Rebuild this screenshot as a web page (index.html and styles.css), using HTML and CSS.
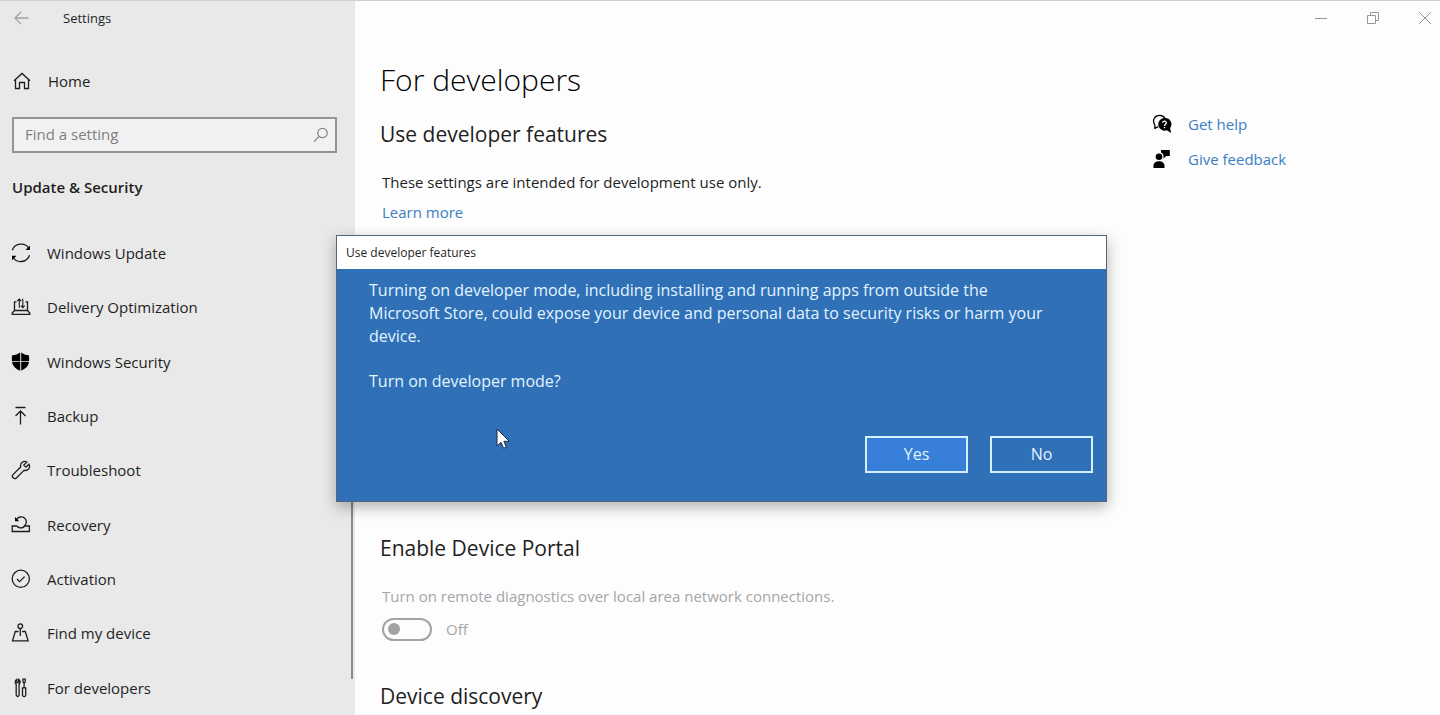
FILE: index.html
```html
<!DOCTYPE html>
<html lang="en">
<head>
<meta charset="utf-8">
<meta name="viewport" content="width=device-width, initial-scale=1">
<title>Settings</title>
<link rel="stylesheet" href="styles.css">
</head>
<body>
<div class="window">
  <aside class="sidebar">
    <header class="titlebar">
      <button class="back" type="button" aria-label="Back">
        <svg width="16" height="14" viewBox="0 0 16 14"><path d="M14.500 7H1M7 1L1 7l6 6"/></svg>
      </button>
      <span class="app-name">Settings</span>
    </header>
    <a class="home" href="#">
      <svg class="icon" width="20" height="20" viewBox="0 0 20 20"><path d="M2 9.800L10 2.500l8 7.300M3.500 8.600v8.900h4v-6h5v6h4V8.600"/></svg>
      <span>Home</span>
    </a>
    <form class="search" role="search">
      <input class="search-input" type="search" placeholder="Find a setting" aria-label="Find a setting">
      <button class="search-button" type="button" aria-label="Search">
        <svg width="16" height="16" viewBox="0 0 16 16"><circle cx="9.500" cy="6" r="4.700"/><path d="M6.200 9.400L1 14.600"/></svg>
      </button>
    </form>
    <h2 class="category">Update &amp; Security</h2>
    <nav class="nav">
      <a class="nav-item" href="#">
        <svg class="icon" width="20" height="20" viewBox="0 0 20 20"><path d="M1.300 7.200C4-.4 14.500-.8 18 5.500M18.500 12.200C15.800 20.200 5.400 20.400 1.800 14"/><path class="solid" d="M18.900 2.500v4.500h-4.500zM1 17.200v-4.500h4.500z"/></svg>
        <span>Windows Update</span>
      </a>
      <a class="nav-item" href="#">
        <svg class="icon" width="20" height="20" viewBox="0 0 20 20"><path d="M5.500 4.800H3.500V13.500M14.500 4.800h2V13.500M3.500 13.500h13l2.300 2.600v1.200H1.200v-1.200z"/><path class="thin" d="M8.300 10.800V2M6.300 4l2-2 2 2M11.800 1.800v8.800M9.900 8.700l1.900 2 1.900-2"/></svg>
        <span>Delivery Optimization</span>
      </a>
      <a class="nav-item" href="#">
        <svg class="icon" width="20" height="20" viewBox="0 0 20 20"><path class="solid" d="M9.200 .6v8.600H.9V3.400C4.200 3.300 7.200 2.100 9.200 .6zM10.200 .6v8.600h7.900V3.400C14.900 3.300 12.200 2.100 10.200 .6zM1.100 10.100h8.100V18.700C4.700 17 1.700 14.300 1.100 10.100zM18 10.100h-7.800V18.700c4.500-2 7.200-4.400 7.800-8.600z"/></svg>
        <span>Windows Security</span>
      </a>
      <a class="nav-item" href="#">
        <svg class="icon" width="20" height="20" viewBox="0 0 20 20"><path d="M4.500 1.500h10M9.500 18.500V5M4.500 10l5-5 5 5"/></svg>
        <span>Backup</span>
      </a>
      <a class="nav-item" href="#">
        <svg class="icon" width="20" height="20" viewBox="0 0 20 20"><path d="M17.900 4.200l-3 3-2.100-2.100 3-3C12.500.3 9 2.700 9.600 7L2 14.600c-2 2.200 1.300 5.300 3.400 3.400L13 10.400c4.300.6 6.800-2.700 4.900-6.200z"/></svg>
        <span>Troubleshoot</span>
      </a>
      <a class="nav-item" href="#">
        <svg class="icon" width="20" height="20" viewBox="0 0 20 20"><path d="M6.200 11H1.200v5.500h17.200V11h-5C16 8.500 16 5 13.500 3 10.800 1 7 1.800 5.500 4.600M6.200 11c.8 2.500 6.500 2.500 7.200 0"/><path class="solid" d="M4 2v4.200h4.200z"/></svg>
        <span>Recovery</span>
      </a>
      <a class="nav-item" href="#">
        <svg class="icon" width="20" height="20" viewBox="0 0 20 20"><circle cx="9.800" cy="9.800" r="8.600"/><path d="M6 10l2.600 2.600 5-5"/></svg>
        <span>Activation</span>
      </a>
      <a class="nav-item" href="#">
        <svg class="icon" width="20" height="20" viewBox="0 0 20 20"><circle cx="9.300" cy="3.200" r="2.300"/><path d="M9.300 5.500V13M7.500 8.500H4.300L1.500 17.800h15.600L14.300 8.500h-3.200"/></svg>
        <span>Find my device</span>
      </a>
      <a class="nav-item" href="#" aria-current="page">
        <svg class="icon" width="20" height="20" viewBox="0 0 20 20"><path d="M5.800 1.300v3.200h1.800V1.300c2 .9 2 3.900.5 5v10.900c-.4 1.700-2.500 1.700-2.900 0V6.300c-1.400-1.100-1.400-4.100.6-5zM12 1.200h2.200v2.600l-1.100 1.500L12 3.800zM13.100 5.300V10M10.800 9.800h4.600M11.500 9.800v7.600c.4 1.500 2.800 1.500 3.200 0V9.800"/></svg>
        <span>For developers</span>
      </a>
    </nav>
    <div class="scroll-thumb"></div>
  </aside>

  <main class="main">
    <div class="window-controls">
      <button type="button" aria-label="Minimize"><svg width="12" height="12" viewBox="0 0 12 12"><path d="M0 6.500h12"/></svg></button>
      <button type="button" aria-label="Restore"><svg width="12" height="12" viewBox="0 0 12 12"><path d="M.5 3.500h8v8h-8zM3.500 3V.5h8v8H9"/></svg></button>
      <button type="button" aria-label="Close"><svg width="12" height="12" viewBox="0 0 12 12"><path d="M0 0l12 12M12 0L0 12"/></svg></button>
    </div>
    <div class="columns">
      <div class="content">
        <h1 class="page-title">For developers</h1>
        <section class="section features">
          <h2 class="section-title">Use developer features</h2>
          <p class="text">These settings are intended for development use only.</p>
          <a class="link" href="#">Learn more</a>
        </section>
        <section class="section">
          <h2 class="section-title">Enable Device Portal</h2>
          <p class="text muted">Turn on remote diagnostics over local area network connections.</p>
          <label class="toggle">
            <input class="switch" type="checkbox" role="switch" disabled>
            <span>Off</span>
          </label>
        </section>
        <section class="section">
          <h2 class="section-title">Device discovery</h2>
        </section>
      </div>
      <div class="help">
        <a class="help-link" href="#">
          <svg width="20" height="20" viewBox="0 0 20 20"><path class="line" d="M2.800 14.200V11C-.3 6 3 1.300 7.500 1.300c2.500 0 4.500 1.200 5.500 3M2.300 14.700l4-2"/><path class="solid" d="M12.500 4a6.300 6.300 0 1 0 2.300 12.200l4.400 2.800-1.100-4.900A6.300 6.300 0 0 0 12.500 4z"/><path class="mark" d="M10.600 8.700c.2-2.300 3.900-2 3.700.2-.1 1.300-1.800 1.300-1.800 3M12.500 13v1.300"/></svg>
          <span>Get help</span>
        </a>
        <a class="help-link" href="#">
          <svg width="20" height="20" viewBox="0 0 20 20"><circle class="solid" cx="7" cy="7.800" r="3.300"/><path class="solid" d="M1.500 19v-2.500c0-5.700 11-5.700 11 0V19zM9 1h8.800v6h-3.600l-2.700 2.700V7C11.300 5.200 10.500 4 9 3.500z"/></svg>
          <span>Give feedback</span>
        </a>
      </div>
    </div>
  </main>

  <div class="dialog" role="dialog" aria-labelledby="dialog-title">
    <div class="dialog-title" id="dialog-title">Use developer features</div>
    <div class="dialog-body">
      <p>Turning on developer mode, including installing and running apps from outside the Microsoft Store, could expose your device and personal data to security risks or harm your device.</p>
      <p>Turn on developer mode?</p>
      <div class="dialog-actions">
        <button class="dialog-button primary" type="button">Yes</button>
        <button class="dialog-button" type="button">No</button>
      </div>
    </div>
  </div>
  <svg class="pointer" width="14" height="22" viewBox="0 0 14 22"><path d="M1 1v17l4-3.700 2.600 6 2.800-1.200-2.600-5.800h5.500z"/></svg>
</div>
</body>
</html>
```
FILE: styles.css
```css
* {
  box-sizing: border-box;
}

body {
  margin: 0;
  font-family: "Open Sans", "Noto Sans", sans-serif;
  font-size: 15px;
  line-height: 24px;
  color: #1f1f1f;
  background: #fdfdfd;
}

h1, h2, p {
  margin: 0;
  font-weight: 400;
}

a {
  color: inherit;
  text-decoration: none;
}

button {
  padding: 0;
  border: 0;
  background: none;
  font: inherit;
  color: inherit;
}

svg {
  display: block;
  flex: none;
  fill: none;
  stroke: #1c1c1c;
  stroke-width: 1.3;
}

.solid {
  fill: #000;
  stroke: none;
}

.thin {
  stroke-width: 1.1;
}

.window {
  position: relative;
  display: flex;
  height: 100vh;
  overflow: hidden;
  border-top: 1px solid #cfcfcf;
}

/* Sidebar */

.sidebar {
  position: relative;
  display: flex;
  flex: none;
  flex-direction: column;
  width: 355px;
  padding: 0 18px 0 12px;
  background: #e9e9e9;
}

.titlebar {
  display: flex;
  align-items: center;
  height: 34px;
  font-size: 13px;
}

.back {
  width: 51px;
  padding-left: 2px;
}

.back svg {
  stroke: #a3a3a3;
}

.home {
  display: flex;
  align-items: center;
  gap: 16px;
  height: 36px;
  margin-top: 28px;
}

.search {
  display: flex;
  align-items: center;
  height: 36px;
  margin-top: 18px;
  border: 2px solid #939393;
  background: #f1f1f1;
}

.search-input {
  flex: 1;
  min-width: 0;
  height: 32px;
  padding: 0 11px 2px;
  border: 0;
  outline: 0;
  background: transparent;
  font: inherit;
  color: #1f1f1f;
}

.search-input::placeholder {
  color: #808080;
}

.search-button {
  margin-right: 6px;
}

.search-button svg {
  stroke: #858585;
}

.category {
  margin-top: 22px;
  font-size: 15px;
  font-weight: 600;
}

.nav {
  display: grid;
  flex: 1;
  grid-auto-rows: minmax(32px, 1fr);
  margin-top: 27px;
}

.nav-item {
  display: flex;
  align-items: center;
  gap: 16px;
}

.nav .icon {
  margin-left: -1px;
}

.scroll-thumb {
  position: absolute;
  top: 240px;
  right: 2px;
  bottom: 36px;
  width: 2px;
  background: #8a8a8a;
}

/* Main pane */

.main {
  flex: 1;
  min-width: 0;
}

.window-controls {
  display: flex;
  justify-content: flex-end;
  gap: 12px;
  height: 33px;
}

.window-controls button {
  display: grid;
  place-items: center;
  width: 40px;
}

.window-controls button:last-child {
  margin-right: -5px;
}

.window-controls svg {
  stroke: #969696;
  stroke-width: 1;
}

.columns {
  display: flex;
  justify-content: space-between;
  padding: 24px 38px 0 25px;
}

.page-title {
  font-size: 30px;
  font-weight: 300;
  line-height: 44px;
  color: #000;
}

.section {
  padding-top: 16px;
}

.section-title {
  font-size: 21px;
  line-height: 32px;
}

.text {
  padding: 20px 0 0 2px;
}

.features {
  min-height: 414px;
}

.link,
.help {
  color: #3a7fc4;
}

.link {
  display: inline-block;
  margin-top: 6px;
  padding-left: 2px;
}

.muted {
  color: #a6a6a6;
}

.toggle {
  display: flex;
  align-items: center;
  gap: 14px;
  margin: 9px 0 23px;
  padding-left: 2px;
  color: #a6a6a6;
}

.switch {
  display: flex;
  align-items: center;
  width: 50px;
  height: 23px;
  margin: 0;
  padding: 0 4px;
  border: 2px solid #a3a3a3;
  border-radius: 12px;
  appearance: none;
}

.switch::before {
  width: 12px;
  height: 12px;
  border-radius: 50%;
  background: #a3a3a3;
  content: "";
}

.help {
  display: grid;
  gap: 11px;
  align-content: start;
  width: 250px;
  padding-top: 54px;
}

.help-link {
  display: flex;
  align-items: center;
  gap: 16px;
}

.help .line {
  stroke: #000;
}

.help .mark {
  stroke: #fff;
}

/* Confirmation dialog */

.dialog {
  position: absolute;
  top: 234px;
  left: 336px;
  width: 771px;
  border: 1px solid #55667a;
  background: #2f70b7;
  box-shadow: 0 5px 14px rgba(0, 0, 0, 0.3);
}

.dialog-title {
  height: 33px;
  padding: 0 9px;
  background: #fff;
  font-size: 12px;
  line-height: 33px;
}

.dialog-body {
  display: grid;
  gap: 22px;
  padding: 10px 13px 28px 32px;
  font-size: 16px;
  line-height: 23px;
  color: #e3f4ff;
}

.dialog-body p {
  max-width: 690px;
}

.dialog-actions {
  display: flex;
  justify-content: flex-end;
  gap: 22px;
  margin-top: 21px;
}

.dialog-button {
  width: 103px;
  height: 37px;
  border: 2px solid #d3f1ff;
}

.primary {
  background: #377fd9;
}

.pointer {
  position: absolute;
  top: 427px;
  left: 496px;
  fill: #fff;
  stroke: #1b2a44;
  stroke-width: 1;
}
```
